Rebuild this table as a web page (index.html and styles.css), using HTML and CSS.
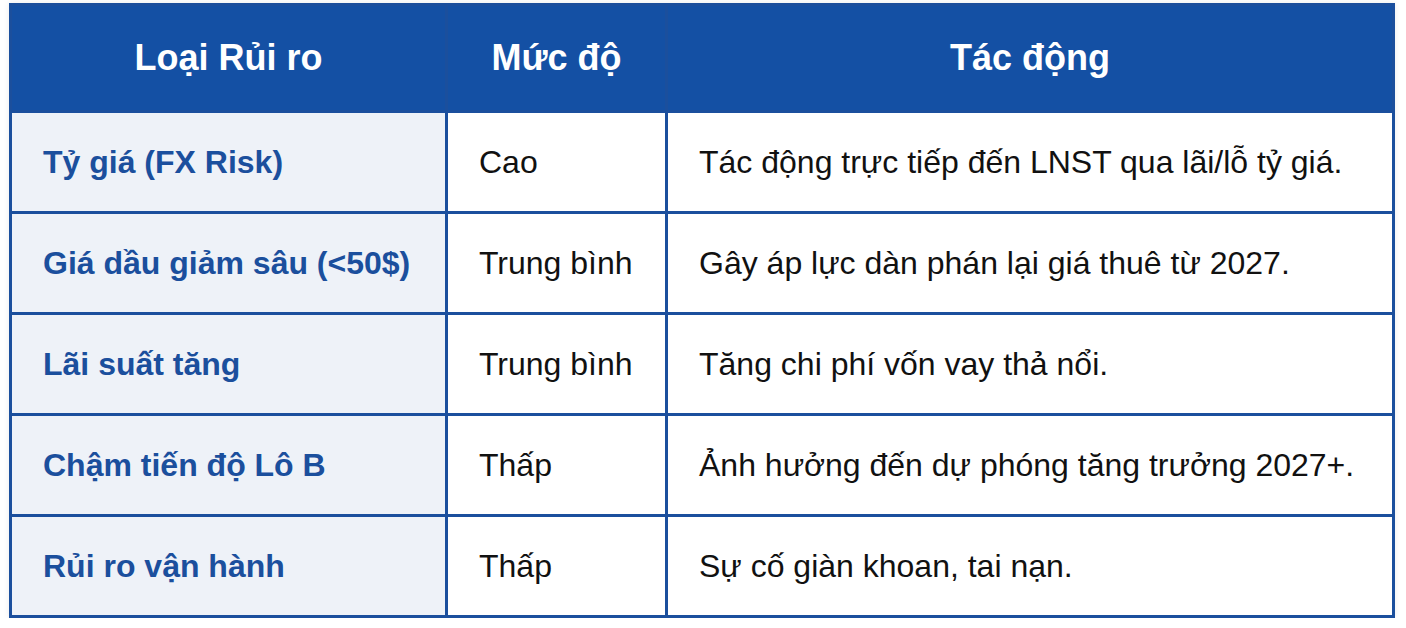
FILE: index.html
```html
<!DOCTYPE html>
<html lang="vi">
<head>
<meta charset="utf-8">
<link rel="stylesheet" href="styles.css">
</head>
<body>
<table class="risk">
  <colgroup>
    <col class="c1"><col class="c2"><col class="c3">
  </colgroup>
  <thead>
    <tr><th>Loại Rủi ro</th><th>Mức độ</th><th>Tác động</th></tr>
  </thead>
  <tbody>
    <tr><td class="name">Tỷ giá (FX Risk)</td><td>Cao</td><td>Tác động trực tiếp đến LNST qua lãi/lỗ tỷ giá.</td></tr>
    <tr><td class="name">Giá dầu giảm sâu (&lt;50$)</td><td>Trung bình</td><td>Gây áp lực dàn phán lại giá thuê từ 2027.</td></tr>
    <tr><td class="name">Lãi suất tăng</td><td>Trung bình</td><td>Tăng chi phí vốn vay thả nổi.</td></tr>
    <tr><td class="name">Chậm tiến độ Lô B</td><td>Thấp</td><td>Ảnh hưởng đến dự phóng tăng trưởng 2027+.</td></tr>
    <tr><td class="name">Rủi ro vận hành</td><td>Thấp</td><td>Sự cố giàn khoan, tai nạn.</td></tr>
  </tbody>
</table>
</body>
</html>
```

FILE: styles.css
```css
html, body { margin: 0; padding: 0; background: #ffffff; }
body { padding: 3px 0 0 9px; font-family: "Liberation Sans", Arial, sans-serif; }
.risk {
  border-collapse: collapse;
  table-layout: fixed;
  width: 1383px;
  box-shadow: 0 0 6px rgba(0,0,0,0.08);
}
.c1 { width: 436px; }
.c2 { width: 220px; }
.c3 { width: 727px; }
.risk th, .risk td {
  border: 3px solid #1b4f9d;
  padding: 0 0 0 31px;
  text-align: left;
}
.risk th {
  background: #1450a4;
  color: #ffffff;
  font-weight: bold;
  font-size: 36px;
  text-align: center;
  padding: 0;
  height: 104px;
}
.risk tbody tr { height: 101px; }
.risk td { font-size: 32px; color: #111111; background: #ffffff; }
.risk td.name { background: #eef2f8; color: #1b4f9d; font-weight: bold; padding-left: 31px; }
```
